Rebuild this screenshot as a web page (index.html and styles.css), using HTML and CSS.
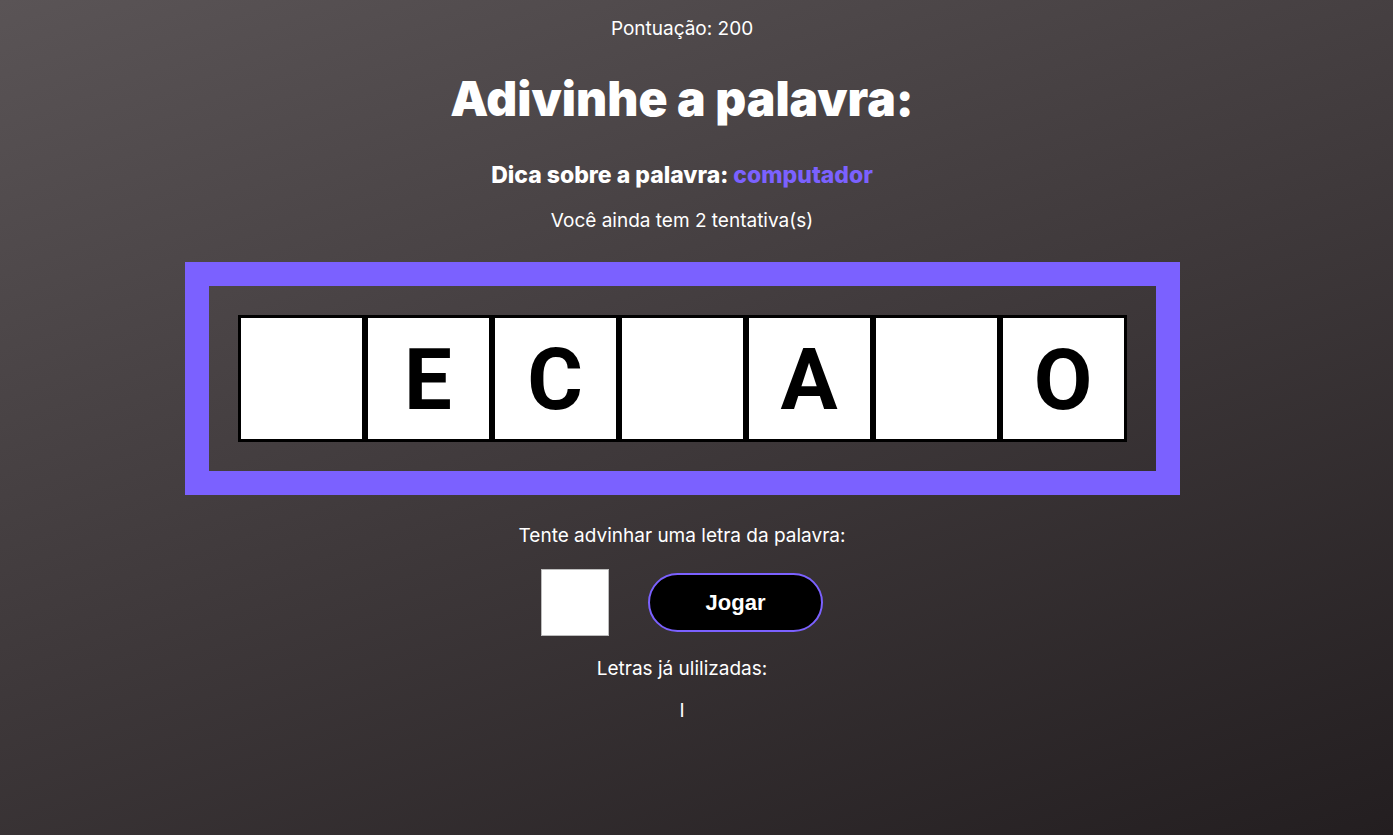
FILE: index.html
```html
<!DOCTYPE html>
<html lang="pt">
<head>
<meta charset="utf-8">
<title>Jogo da forca</title>
<link rel="stylesheet" href="styles.css">
</head>
<body>
<main class="page">
  <p class="score">Pontuação: 200</p>
  <h1 class="title">Adivinhe a palavra:</h1>
  <p class="hint">Dica sobre a palavra: <span class="hint-word">computador</span></p>
  <p class="tries">Você ainda tem 2 tentativa(s)</p>
  <section class="board">
    <div class="tiles">
      <div class="tile"></div>
      <div class="tile">E</div>
      <div class="tile">C</div>
      <div class="tile"></div>
      <div class="tile">A</div>
      <div class="tile"></div>
      <div class="tile">O</div>
    </div>
  </section>
  <p class="prompt">Tente advinhar uma letra da palavra:</p>
  <div class="controls">
    <input class="letter" type="text" maxlength="1">
    <button class="play">Jogar</button>
  </div>
  <p class="used-label">Letras já ulilizadas:</p>
  <p class="used">I</p>
</main>
</body>
</html>
```
FILE: styles.css
```css
html, body {
  margin: 0;
  height: 100%;
}
body {
  background: linear-gradient(160deg, #5a5456 0%, #3f393b 50%, #231e20 100%);
  color: #ffffff;
  font-family: "Inter", "Open Sans", sans-serif;
  overflow: hidden;
}
.page {
  display: flex;
  flex-direction: column;
  align-items: center;
  padding-right: 29px;
}
.score {
  margin: 18px 0 0;
  font-size: 19px;
  line-height: 22px;
}
.title {
  margin: 31px 0 0;
  font-size: 48px;
  line-height: 56px;
  font-weight: 900;
}
.hint {
  margin: 35px 0 0;
  font-size: 23px;
  line-height: 27px;
  font-weight: 800;
}
.hint-word {
  color: #7b61ff;
}
.tries {
  margin: 21px 0 0;
  font-size: 19px;
  line-height: 22px;
}
.board {
  margin-top: 30px;
  border: 24px solid #7b61ff;
  padding: 29px;
}
.tiles {
  display: flex;
}
.tile {
  width: 121px;
  height: 119px;
  padding-top: 2px;
  box-sizing: content-box;
  border: 3px solid #000000;
  background: #ffffff;
  color: #000000;
  font-family: "Roboto", "Liberation Sans", sans-serif;
  font-weight: 700;
  font-size: 85px;
  display: flex;
  align-items: center;
  justify-content: center;
}
.prompt {
  margin: 30px 0 0;
  font-size: 19px;
  line-height: 22px;
}
.controls {
  margin-top: 22px;
  display: flex;
  align-items: center;
  gap: 39px;
}
.letter {
  width: 66px;
  height: 65px;
  margin: 0;
  padding: 0;
  border: 1px solid #bdbdbd;
  background: #ffffff;
  box-sizing: content-box;
}
.play {
  width: 175px;
  height: 59px;
  border: 2px solid #7b61ff;
  border-radius: 30px;
  background: #000000;
  color: #ffffff;
  font-family: "Liberation Sans", Arial, sans-serif;
  font-weight: 700;
  font-size: 22px;
}
.used-label {
  margin: 22px 0 0;
  font-size: 19px;
  line-height: 22px;
}
.used {
  margin: 20px 0 0;
  font-size: 19px;
  line-height: 22px;
}
```
